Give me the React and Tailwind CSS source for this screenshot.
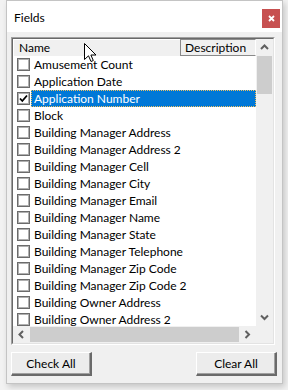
import React from "react";

const rows = [
  "Amusement Count",
  "Application Date",
  "Application Number",
  "Block",
  "Building Manager Address",
  "Building Manager Address 2",
  "Building Manager Cell",
  "Building Manager City",
  "Building Manager Email",
  "Building Manager Name",
  "Building Manager State",
  "Building Manager Telephone",
  "Building Manager Zip Code",
  "Building Manager Zip Code 2",
  "Building Owner Address",
  "Building Owner Address 2",
];

function Check({ checked }) {
  return (
    <div className="w-[13px] h-[13px] shrink-0 bg-white border border-[#6b6b6b] shadow-[inset_0_0_0_1px_#b0b0b0] flex items-center justify-center">
      {checked && (
        <svg width="11" height="11" viewBox="0 0 11 11">
          <path d="M2 5.5 L4.3 8 L9 2.5" fill="none" stroke="#000" strokeWidth="1.8" />
        </svg>
      )}
    </div>
  );
}

function Chevron({ dir }) {
  const pts = {
    up: "1,5 4.5,1.5 8,5",
    down: "1,1.5 4.5,5 8,1.5",
    left: "5,1 1.5,4.5 5,8",
    right: "1.5,1 5,4.5 1.5,8",
  }[dir];
  const w = dir === "up" || dir === "down" ? 9 : 7;
  const h = dir === "up" || dir === "down" ? 7 : 9;
  return (
    <svg width={w} height={h} viewBox={`0 0 ${w} ${h}`}>
      <polyline points={pts} fill="none" stroke="#606060" strokeWidth="2" />
    </svg>
  );
}

function Btn({ children }) {
  return (
    <div className="w-[81px] h-[24px] bg-[#ececec] border-t border-l border-t-white border-l-white border-r-2 border-b-2 border-r-[#6a6a6a] border-b-[#6a6a6a] shadow-[inset_-1px_-1px_0_#a0a0a0] flex items-center justify-center text-[12px] text-black">
      {children}
    </div>
  );
}

export default function App() {
  return (
    <div
      className="w-[288px] h-[390px] bg-[#f2f2f2] relative overflow-hidden"
      style={{ fontFamily: "Lato, 'Liberation Sans', sans-serif" }}
    >
      <div className="absolute left-[6px] top-0 w-[277px] h-[384px] border border-[#c4c4c4] bg-[#f0f0f0] shadow-[2px_3px_6px_rgba(0,0,0,0.18)] flex flex-col">
        {/* Title bar */}
        <div className="h-[31px] bg-white flex items-start justify-between shrink-0">
          <div className="pl-[7px] pt-[9px] text-[12px] text-black leading-[15px]">Fields</div>
          <div className="mt-[8px] mr-[2px] w-[18px] h-[19px] bg-[#c75050] flex items-center justify-center">
            <svg width="7" height="7" viewBox="0 0 7 7">
              <path d="M1 1 L6 6 M6 1 L1 6" stroke="#fff" strokeWidth="1.8" />
            </svg>
          </div>
        </div>

        {/* List box */}
        <div className="ml-[4px] mt-[5px] w-[264px] h-[308px] border-t border-l border-t-[#a0a0a0] border-l-[#a0a0a0] border-r border-b border-r-white border-b-white">
          <div className="w-full h-full border-t border-l border-t-[#696969] border-l-[#696969] border-r border-b border-r-[#e3e3e3] border-b-[#e3e3e3] flex flex-col bg-white">
            <div className="flex flex-1 min-h-0">
              {/* list area */}
              <div className="w-[243px] flex flex-col overflow-hidden">
                {/* header */}
                <div className="h-[17px] shrink-0 flex bg-[#f0f0f0] text-[12px] leading-[15px] text-black">
                  <div className="w-[167px] border-t border-l border-white pl-[5px]">Name</div>
                  <div className="flex-1 border-t border-l border-b border-[#8a8a8a] border-r border-r-white pl-[4px]">Description</div>
                </div>
                {/* rows */}
                <div className="flex flex-col">
                  {rows.map((r, i) => {
                    const sel = i === 2;
                    return (
                      <div key={r} className="h-[17px] shrink-0 flex items-center pl-[4px]">
                        <Check checked={sel} />
                        <div
                          className={
                            sel
                              ? "ml-[1px] flex-1 h-[17px] bg-[#0078d7] text-white pl-[2px] text-[12px] leading-[15px] border border-dotted border-[#f0c060]"
                              : "ml-[1px] flex-1 h-[17px] text-black pl-[3px] pt-[1px] text-[12px] leading-[15px] whitespace-nowrap"
                          }
                        >
                          {r}
                        </div>
                      </div>
                    );
                  })}
                </div>
              </div>
              {/* vertical scrollbar */}
              <div className="w-[17px] bg-[#f0f0f0] flex flex-col">
                <div className="h-[17px] flex items-center justify-center">
                  <Chevron dir="up" />
                </div>
                <div className="h-[38px] mx-[1px] bg-[#cdcdcd]" />
                <div className="flex-1" />
                <div className="h-[17px] flex items-center justify-center">
                  <Chevron dir="down" />
                </div>
              </div>
            </div>
            {/* horizontal scrollbar */}
            <div className="h-[17px] shrink-0 flex bg-[#f0f0f0]">
              <div className="w-[17px] flex items-center justify-center">
                <Chevron dir="left" />
              </div>
              <div className="w-[209px] my-[1px] bg-[#cdcdcd]" />
              <div className="w-[17px] flex items-center justify-center">
                <Chevron dir="right" />
              </div>
              <div className="flex-1 bg-[#f0f0f0]" />
            </div>
          </div>
        </div>

        {/* Buttons */}
        <div className="flex justify-between ml-[4px] mr-[5px] mt-[7px]">
          <Btn>Check All</Btn>
          <Btn>Clear All</Btn>
        </div>
      </div>

      {/* mouse cursor */}
      <svg className="absolute left-[84px] top-[43px]" width="13" height="20" viewBox="0 0 13 20">
        <path d="M0.5 0.5 L0.5 16.5 L4.5 12.8 L7 18.5 L9.3 17.5 L6.9 12 L12 12 Z" fill="#fff" stroke="#000" strokeWidth="1" />
      </svg>
    </div>
  );
}
